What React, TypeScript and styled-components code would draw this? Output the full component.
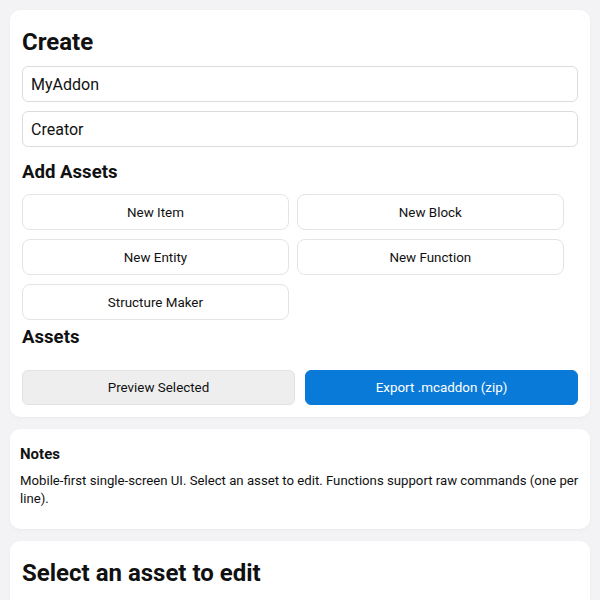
import React from 'react';
import styled, { createGlobalStyle } from 'styled-components';

const GlobalStyle = createGlobalStyle`
  html, body {
    margin: 0;
    padding: 0;
    background: #f3f3f5;
    font-family: Roboto, "Noto Sans", sans-serif;
    color: #111;
  }
  * { box-sizing: border-box; }
`;

const Page = styled.div`
  display: flex;
  flex-direction: column;
  gap: 12px;
  padding: 10px;
`;

const Card = styled.section<{ $pad?: number }>`
  background: #fff;
  border-radius: 10px;
  padding: ${(p) => p.$pad ?? 12}px;
  box-shadow: 0 1px 3px rgba(0, 0, 0, 0.04);
`;

const Title = styled.h2`
  margin: 6px 0 10px;
  font-size: 24px;
  line-height: 28px;
  font-weight: 700;
`;

const Field = styled.input`
  display: block;
  width: 100%;
  height: 36px;
  margin-bottom: 9px;
  padding: 0 8px;
  border: 1px solid #dcdcdc;
  border-radius: 6px;
  font-family: inherit;
  font-size: 16px;
  color: #111;
  background: #fff;
  outline: none;
`;

const Subtitle = styled.h3<{ $top?: number; $bottom?: number }>`
  margin: ${(p) => p.$top ?? 4}px 0 ${(p) => p.$bottom ?? 10}px;
  font-size: 18.6px;
  line-height: 24px;
  font-weight: 700;
`;

const AssetGrid = styled.div`
  display: flex;
  flex-wrap: wrap;
  gap: 9px 8px;
`;

const AssetButton = styled.button`
  width: 48%;
  height: 36px;
  border: 1px solid #e4e4e4;
  border-radius: 8px;
  background: #fff;
  font-family: inherit;
  font-size: 13.4px;
  color: #111;
`;

const ActionRow = styled.div`
  display: flex;
  gap: 10px;
`;

const ActionButton = styled.button<{ $primary?: boolean }>`
  flex: 1;
  height: 35px;
  border-radius: 6px;
  border: 1px solid ${(p) => (p.$primary ? '#0a7ad8' : '#e2e2e2')};
  background: ${(p) => (p.$primary ? '#0a7ad8' : '#eeeeee')};
  color: ${(p) => (p.$primary ? '#fff' : '#111')};
  font-family: inherit;
  font-size: 13.4px;
`;

const NotesTitle = styled.h4`
  margin: 5px 0 8px;
  font-size: 15px;
  line-height: 20px;
  font-weight: 700;
`;

const NotesText = styled.p`
  margin: 0 0 11px;
  font-size: 13.2px;
  line-height: 18px;
`;

const assetTypes = ['New Item', 'New Block', 'New Entity', 'New Function', 'Structure Maker'];

export default function App() {
  return (
    <>
      <GlobalStyle />
      <Page>
        <Card>
          <Title>Create</Title>
          <Field defaultValue="MyAddon" />
          <Field defaultValue="Creator" />
          <Subtitle $top={13}>Add Assets</Subtitle>
          <AssetGrid>
            {assetTypes.map((t) => (
              <AssetButton key={t}>{t}</AssetButton>
            ))}
          </AssetGrid>
          <Subtitle $top={5} $bottom={21}>Assets</Subtitle>
          <ActionRow>
            <ActionButton>Preview Selected</ActionButton>
            <ActionButton $primary>Export .mcaddon (zip)</ActionButton>
          </ActionRow>
        </Card>
        <Card $pad={10}>
          <NotesTitle>Notes</NotesTitle>
          <NotesText>
            Mobile-first single-screen UI. Select an asset to edit. Functions support raw commands (one per line).
          </NotesText>
        </Card>
        <Card>
          <Title>Select an asset to edit</Title>
        </Card>
      </Page>
    </>
  );
}
